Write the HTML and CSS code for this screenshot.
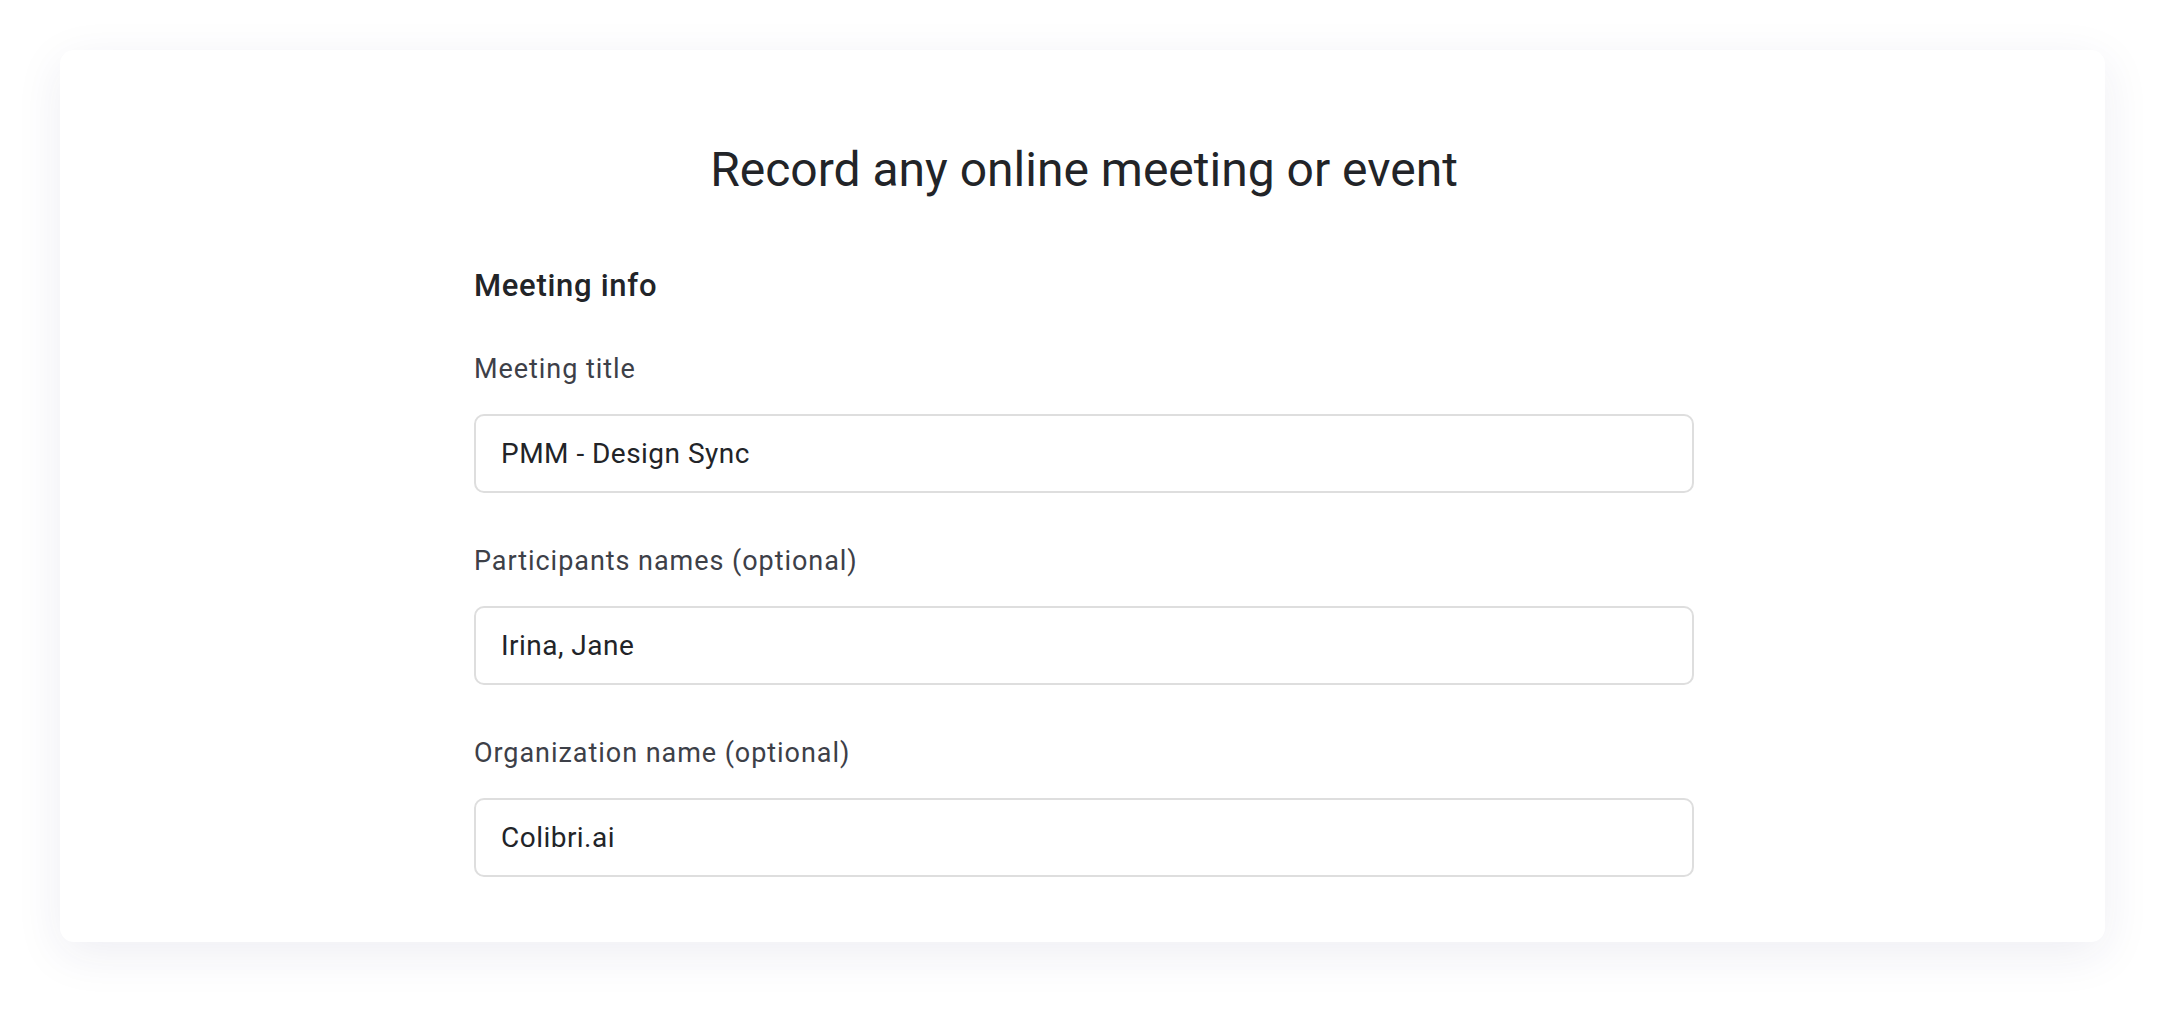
FILE: index.html
```html
<!DOCTYPE html>
<html lang="en">
<head>
<meta charset="utf-8">
<title>Record any online meeting or event</title>
<link rel="stylesheet" href="styles.css">
</head>
<body>
<main class="card">
  <h1 class="title">Record any online meeting or event</h1>
  <h2 class="section">Meeting info</h2>
  <div class="field">
    <label class="label" for="title">Meeting title</label>
    <input class="input" id="title" type="text" value="PMM - Design Sync">
  </div>
  <div class="field">
    <label class="label" for="participants">Participants names (optional)</label>
    <input class="input" id="participants" type="text" value="Irina, Jane">
  </div>
  <div class="field">
    <label class="label" for="org">Organization name (optional)</label>
    <input class="input" id="org" type="text" value="Colibri.ai">
  </div>
</main>
</body>
</html>
```
FILE: styles.css
```css
html, body {
  margin: 0;
  padding: 0;
  background: #ffffff;
}
body {
  padding: 50px 61px 70px 60px;
  font-family: Roboto, "Noto Sans", Arial, sans-serif;
}
.card {
  background: #ffffff;
  border-radius: 14px;
  box-shadow: 0 12px 48px rgba(40, 40, 100, 0.08);
  padding: 92px 411px 65px 414px;
  display: flex;
  flex-direction: column;
}
.title {
  margin: 0;
  font-size: 48px;
  line-height: 56px;
  font-weight: 400;
  color: #222428;
  text-align: center;
}
.section {
  margin: 70px 0 0;
  font-size: 31px;
  line-height: 36px;
  font-weight: 500;
  letter-spacing: 0.7px;
  color: #222428;
}
.field {
  display: flex;
  flex-direction: column;
  gap: 30px;
  margin-top: 50px;
}
.field + .field {
  margin-top: 53px;
}
.label {
  font-size: 27px;
  line-height: 30px;
  letter-spacing: 0.95px;
  color: #3d4048;
}
.input {
  box-sizing: border-box;
  height: 79px;
  width: 100%;
  margin: 0;
  padding: 0 25px;
  border: 2px solid #dedede;
  border-radius: 10px;
  font-family: inherit;
  font-size: 28px;
  letter-spacing: 0.47px;
  color: #222428;
  background: #ffffff;
  outline: none;
}
```
